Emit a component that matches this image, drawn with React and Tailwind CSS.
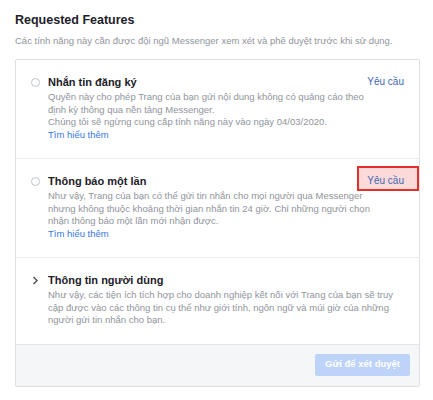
import React from 'react';

const font = { fontFamily: '"Liberation Sans", Arial, Helvetica, sans-serif' };

const Radio = () => (
  <span className="block w-[9px] h-[9px] rounded-full border border-[#bec3c9] bg-white" />
);

const Chevron = () => (
  <svg width="9" height="9" viewBox="0 0 9 9" className="block">
    <polyline points="2.5,1 6,4.5 2.5,8" fill="none" stroke="#4b4f56" strokeWidth="1.4" />
  </svg>
);

const FeatureRow = ({ icon, title, lines, link, request, highlight, wide, last }) => {
  return (
    <div
      className={
        'relative flex px-[15px] pt-[14px] pb-[17px] ' +
        (last ? 'border-b border-[#e5e6e9]' : 'border-b border-[#e9ebee]')
      }
    >
      <div className="w-[9px] h-[16px] flex items-center shrink-0">{icon}</div>
      <div className="ml-2 flex-1">
        <div className="flex justify-between items-center h-[16px]">
          <span className="text-[11px] font-bold text-[#1d2129] leading-[16px]">{title}</span>
          {request && (
            <span className="relative z-10 text-[10px] leading-[16px] text-[#4267b2]">Yêu cầu</span>
          )}
        </div>
        <div
          className={
            'mt-[1px] text-[9.5px] leading-[12.5px] text-[#90949c] ' + (wide ? '' : 'w-[330px]')
          }
        >
          {lines.map((l, i) => (
            <div key={i}>{l}</div>
          ))}
          {link && <div className="text-[#3578e5]">Tìm hiểu thêm</div>}
        </div>
      </div>
      {highlight && (
        <div className="absolute top-[7px] right-0 w-[62px] h-[25px] border-2 border-[#e3302b] bg-[#fcdada]" />
      )}
    </div>
  );
};

const App = () => {
  return (
    <div className="w-[433px] h-[400px] bg-white pt-[12px] px-[15px]" style={font}>
      <div className="text-[12.5px] font-bold leading-[16px] text-[#1d2129]">Requested Features</div>
      <div className="mt-[7px] text-[9.5px] leading-[12px] text-[#90949c]">
        Các tính năng này cần được đội ngũ Messenger xem xét và phê duyệt trước khi sử dụng.
      </div>
      <div className="mt-[12px] w-[405px] border border-[#dddfe2] rounded-[2px] bg-white">
        <FeatureRow
          icon={<Radio />}
          title="Nhắn tin đăng ký"
          request
          link
          lines={[
            'Quyền này cho phép Trang của bạn gửi nội dung không có quảng cáo theo định kỳ thông qua nền tảng Messenger.',
            'Chúng tôi sẽ ngừng cung cấp tính năng này vào ngày 04/03/2020.',
          ]}
        />
        <FeatureRow
          icon={<Radio />}
          title="Thông báo một lần"
          request
          highlight
          link
          lines={[
            'Như vậy, Trang của bạn có thể gửi tin nhắn cho mọi người qua Messenger nhưng không thuộc khoảng thời gian nhắn tin 24 giờ. Chỉ những người chọn nhận thông báo một lần mới nhận được.',
          ]}
        />
        <FeatureRow
          icon={<Chevron />}
          title="Thông tin người dùng"
          wide
          last
          lines={[
            'Như vậy, các tiện ích tích hợp cho doanh nghiệp kết nối với Trang của bạn sẽ truy cập được vào các thông tin cụ thể như giới tính, ngôn ngữ và múi giờ của những người gửi tin nhắn cho bạn.',
          ]}
        />
        <div className="flex justify-end bg-[#f5f6f7] pt-[9px] pb-[10px] px-[9px]">
          <button className="h-[22px] px-[10px] rounded-[2px] bg-[#bed3f8] text-white text-[9.5px] font-bold">
            Gửi để xét duyệt
          </button>
        </div>
      </div>
    </div>
  );
};

export default App;
